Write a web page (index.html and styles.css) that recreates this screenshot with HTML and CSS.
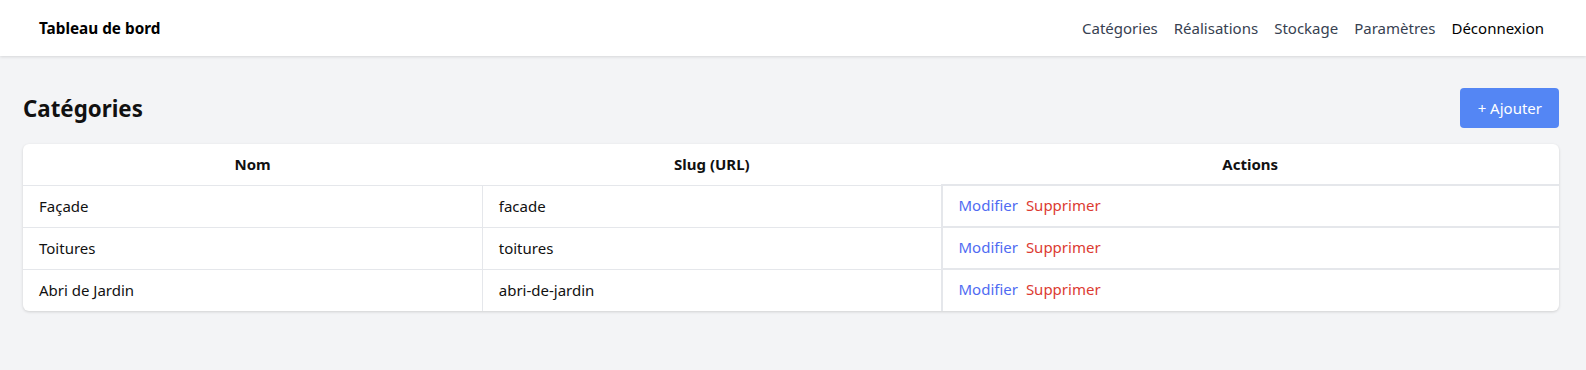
FILE: index.html
```html
<!DOCTYPE html>
<html lang="fr">
<head>
    <meta charset="UTF-8">
    <meta name="viewport" content="width=device-width, initial-scale=1.0">
    <title>Catégories - Tableau de bord</title>
    <link rel="stylesheet" href="styles.css">
</head>
<body>

    <header class="topbar">
        <a href="#" class="brand">Tableau de bord</a>
        <nav class="menu">
            <a href="#">Catégories</a>
            <a href="#">Réalisations</a>
            <a href="#">Stockage</a>
            <a href="#">Paramètres</a>
            <button class="logout">Déconnexion</button>
        </nav>
    </header>

    <main class="content">
        <div class="page-head">
            <h1>Catégories</h1>
            <button class="add-button">+ Ajouter</button>
        </div>

        <div class="table-card">
            <table>
                <thead>
                    <tr>
                        <th class="col-name">Nom</th>
                        <th class="col-slug">Slug (URL)</th>
                        <th>Actions</th>
                    </tr>
                </thead>
                <tbody>
                    <tr>
                        <td>Façade</td>
                        <td>facade</td>
                        <td class="actions"><a href="#" class="edit">Modifier</a> <a href="#" class="delete">Supprimer</a></td>
                    </tr>
                    <tr>
                        <td>Toitures</td>
                        <td>toitures</td>
                        <td class="actions"><a href="#" class="edit">Modifier</a> <a href="#" class="delete">Supprimer</a></td>
                    </tr>
                    <tr>
                        <td>Abri de Jardin</td>
                        <td>abri-de-jardin</td>
                        <td class="actions"><a href="#" class="edit">Modifier</a> <a href="#" class="delete">Supprimer</a></td>
                    </tr>
                </tbody>
            </table>
        </div>
    </main>

</body>
</html>
```

FILE: styles.css
```css
body {
    font-family: "Noto Sans", "Open Sans", sans-serif;
    font-size: 15px;
    background-color: #f3f4f6;
    color: #111;
    margin: 0;
    padding: 0;
}

a {
    text-decoration: none;
}

.topbar {
    height: 56px;
    background-color: white;
    box-shadow: 0 1px 3px rgba(0, 0, 0, 0.12);
    display: flex;
    align-items: center;
    justify-content: space-between;
    padding: 0 42px 0 39px;
}

.brand {
    font-weight: bold;
    color: #000;
    font-size: 15.3px;
}

.menu {
    display: flex;
    align-items: center;
    gap: 16px;
}

.menu a {
    color: #374151;
}

.logout {
    background: none;
    border: none;
    padding: 0;
    font: inherit;
    color: #000;
    cursor: pointer;
}

.content {
    padding: 32px 27px 40px 23px;
}

.page-head {
    display: flex;
    align-items: center;
    justify-content: space-between;
    margin-bottom: 16px;
}

h1 {
    margin: 0;
    font-size: 22.3px;
    font-weight: bold;
}

.add-button {
    height: 40px;
    padding: 0 17px 0 18px;
    background-color: #5486f4;
    color: white;
    border: none;
    border-radius: 4px;
    font: inherit;
    cursor: pointer;
}

.table-card {
    background-color: white;
    border-radius: 6px;
    box-shadow: 0 1px 3px rgba(0, 0, 0, 0.15);
    overflow: hidden;
}

table {
    width: 100%;
    border-collapse: collapse;
}

th {
    font-weight: bold;
    text-align: center;
    padding: 8px 16px;
    line-height: 24px;
    border-bottom: 1px solid #e5e7eb;
}

.col-name, .col-slug {
    width: 29.9%;
}

td {
    padding: 8px 16px;
    line-height: 25px;
    border-top: 1px solid #e5e7eb;
    border-left: 1px solid #e5e7eb;
}

td:first-child {
    border-left: none;
}

td.actions {
    border-left: 2px solid #e5e7eb;
    border-top: 2px solid #e5e7eb;
    padding-top: 7px;
}

tbody tr:first-child td {
    border-top: none;
}

tbody tr:first-child td.actions {
    border-top: 2px solid #e5e7eb;
}

.edit {
    color: #4f6bf2;
}

.delete {
    color: #dc3b32;
    margin-left: 4px;
}
```
